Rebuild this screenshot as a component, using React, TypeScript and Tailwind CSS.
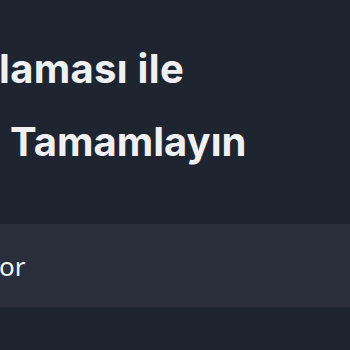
import React from "react";

export default function App() {
  return (
    <div className="w-[350px] h-[350px] overflow-hidden bg-[#1f2530] flex flex-col">
      <div
        className="pt-[32px] flex flex-col text-[40px] leading-[73px] font-bold text-[#eef0f4] whitespace-nowrap"
        style={{ fontFamily: "Inter, 'Noto Sans', sans-serif" }}
      >
        <div className="-ml-[1px] tracking-[0.3px]">laması ile</div>
        <div className="ml-[10px]">Tamamlayın</div>
      </div>
      <div className="mt-[46px] h-[83px] bg-[#2a2f3b] flex items-center">
        <span
          className="text-[26px] leading-[35px] text-[#f1f3f6] -ml-[1px] mt-[1px]"
          style={{ fontFamily: "'Noto Sans', sans-serif" }}
        >
          or
        </span>
      </div>
    </div>
  );
}
